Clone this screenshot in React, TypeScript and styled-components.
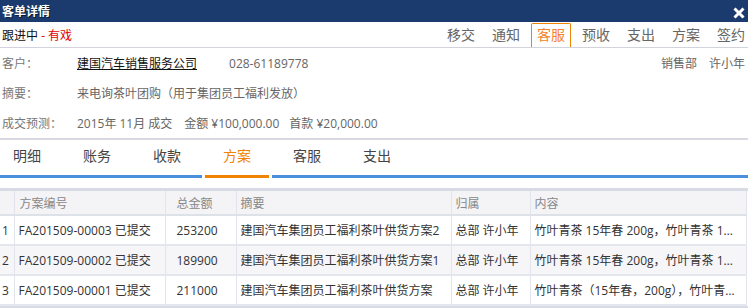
import styled, { createGlobalStyle } from 'styled-components';

const GlobalStyle = createGlobalStyle`
  body {
    margin: 0;
    background: #ffffff;
    font-family: "Open Sans", "Noto Sans CJK SC", sans-serif;
  }
`;

const Panel = styled.div`
  width: 748px;
  height: 308px;
  overflow: hidden;
  background: #ffffff;
`;

const TitleBar = styled.div`
  display: flex;
  align-items: center;
  justify-content: space-between;
  height: 22px;
  padding: 0 3px 0 2px;
  background-color: #1b3b6e;
  color: #ffffff;
  font-size: 12px;
  font-weight: 700;
  text-shadow: 1px 1px 0 #0b1a33;
`;

const CloseIcon = styled.svg`
  width: 12px;
  height: 12px;
  margin-top: 3px;
`;

const StatusRow = styled.div`
  display: flex;
  align-items: flex-end;
  justify-content: space-between;
  height: 25px;
  border-bottom: 1px solid #d3d3de;
`;

const Status = styled.div`
  align-self: center;
  padding-left: 2px;
  font-size: 12px;
  color: #111111;
`;

const Hot = styled.span`
  color: #e60000;
`;

const Actions = styled.div`
  display: flex;
  gap: 5px;
  margin-right: -3px;
`;

const ActionButton = styled.div<{ active?: boolean }>`
  height: 24px;
  line-height: 22px;
  padding: 0 5px;
  box-sizing: border-box;
  border: 1px solid ${props => (props.active ? '#f08300' : 'transparent')};
  border-bottom: none;
  border-radius: 2px 2px 0 0;
  font-size: 14px;
  color: ${props => (props.active ? '#f5822a' : '#666666')};
`;

const Info = styled.div`
  display: flex;
  flex-direction: column;
  border-bottom: 2px solid #d9d9e2;
`;

const InfoRow = styled.div`
  display: flex;
  align-items: center;
  height: 30px;
  font-size: 12px;
  color: #666666;
`;

const Label = styled.span`
  width: 75px;
  padding-left: 2px;
  color: #777777;
`;

const Company = styled.span`
  color: #111111;
  text-decoration: underline;
`;

const Phone = styled.span`
  margin-left: 32px;
`;

const Owner = styled.div`
  display: flex;
  gap: 12px;
  margin-left: auto;
  padding-right: 3px;
`;

const Piece = styled.span<{ gap?: number }>`
  margin-left: ${props => props.gap ?? 0}px;
`;

const TabBar = styled.div`
  display: flex;
  height: 34px;
  margin-top: 1px;
  border-bottom: 3px solid #4a8fdb;
`;

const Tab = styled.div<{ active?: boolean }>`
  position: relative;
  width: 70px;
  padding-left: 13px;
  box-sizing: border-box;
  line-height: 30px;
  font-size: 14px;
  color: ${props => (props.active ? '#f08300' : '#444444')};

  ${props =>
    props.active &&
    `
    &::after {
      content: '';
      position: absolute;
      left: -8px;
      bottom: -3px;
      width: 70px;
      height: 3px;
      box-sizing: border-box;
      background: #f08300;
      border-left: 3px solid #ffffff;
      border-right: 3px solid #ffffff;
    }
  `}
`;

const TableWrap = styled.div`
  margin-top: 10px;
  border-top: 3px solid #d8dbe3;
`;

const Table = styled.table`
  width: 747px;
  table-layout: fixed;
  border-collapse: collapse;
  font-size: 12px;
  color: #333333;
  border-right: 1px solid #e1e5eb;
`;

const HeadCell = styled.th<{ pad?: number }>`
  height: 23px;
  padding: 0 0 0 ${props => props.pad ?? 4}px;
  background: #f4f3f6;
  border-left: 1px solid #e1e5eb;
  border-bottom: 2px solid #dde2e9;
  font-size: 12px;
  font-weight: 400;
  color: #888888;
  text-align: left;
  &:first-child {
    border-left: none;
  }
`;

const BodyRow = styled.tr<{ striped?: boolean }>`
  background: ${props => (props.striped ? '#f6f5f8' : '#ffffff')};
`;

const Cell = styled.td<{ pad?: number }>`
  height: 28px;
  padding: 0 0 0 ${props => props.pad ?? 4}px;
  border-left: 1px solid #e1e5eb;
  border-bottom: 2px solid #e4e8ee;
  white-space: nowrap;
  overflow: hidden;
  text-overflow: ellipsis;
  &:first-child {
    border-left: none;
  }
  &:last-child {
    padding-right: 10px;
  }
`;

const TableBottom = styled.div`
  height: 3px;
  background: #d8dbe3;
`;

const actions = ['移交', '通知', '客服', '预收', '支出', '方案', '签约'];
const tabs = ['明细', '账务', '收款', '方案', '客服', '支出'];

const plans = [
  {
    code: 'FA201509-00003 已提交',
    amount: '253200',
    summary: '建国汽车集团员工福利茶叶供货方案2',
    owner: '总部 许小年',
    content: '竹叶青茶 15年春 200g，竹叶青茶 15年春 100g',
  },
  {
    code: 'FA201509-00002 已提交',
    amount: '189900',
    summary: '建国汽车集团员工福利茶叶供货方案1',
    owner: '总部 许小年',
    content: '竹叶青茶 15年春 200g，竹叶青茶 15年春 100g',
  },
  {
    code: 'FA201509-00001 已提交',
    amount: '211000',
    summary: '建国汽车集团员工福利茶叶供货方案',
    owner: '总部 许小年',
    content: '竹叶青茶（15年春，200g），竹叶青茶（15年春）',
  },
];

const App = () => {
  return (
    <Panel>
      <GlobalStyle />
      <TitleBar>
        <span>客单详情</span>
        <CloseIcon viewBox="0 0 12 12">
          <path d="M1.5 1.5 L10.5 10.5 M10.5 1.5 L1.5 10.5" stroke="#ffffff" strokeWidth="3" />
        </CloseIcon>
      </TitleBar>

      <StatusRow>
        <Status>
          跟进中 <Hot>- 有戏</Hot>
        </Status>
        <Actions>
          {actions.map(a => (
            <ActionButton key={a} active={a === '客服'}>
              {a}
            </ActionButton>
          ))}
        </Actions>
      </StatusRow>

      <Info>
        <InfoRow>
          <Label>客户：</Label>
          <Company>建国汽车销售服务公司</Company>
          <Phone>028-61189778</Phone>
          <Owner>
            <span>销售部</span>
            <span>许小年</span>
          </Owner>
        </InfoRow>
        <InfoRow>
          <Label>摘要：</Label>
          <span>来电询茶叶团购（用于集团员工福利发放）</span>
        </InfoRow>
        <InfoRow>
          <Label>成交预测：</Label>
          <Piece>2015年</Piece>
          <Piece gap={3}>11月</Piece>
          <Piece gap={3}>成交</Piece>
          <Piece gap={12}>金额 ¥100,000.00</Piece>
          <Piece gap={10}>首款 ¥20,000.00</Piece>
        </InfoRow>
      </Info>

      <TabBar>
        {tabs.map(t => (
          <Tab key={t} active={t === '方案'}>
            {t}
          </Tab>
        ))}
      </TabBar>

      <TableWrap>
        <Table>
          <colgroup>
            <col style={{ width: 14 }} />
            <col style={{ width: 151 }} />
            <col style={{ width: 71 }} />
            <col style={{ width: 215 }} />
            <col style={{ width: 79 }} />
            <col />
          </colgroup>
          <thead>
            <tr>
              <HeadCell />
              <HeadCell pad={5}>方案编号</HeadCell>
              <HeadCell pad={11}>总金额</HeadCell>
              <HeadCell>摘要</HeadCell>
              <HeadCell>归属</HeadCell>
              <HeadCell>内容</HeadCell>
            </tr>
          </thead>
          <tbody>
            {plans.map((p, i) => (
              <BodyRow key={p.code} striped={i === 1}>
                <Cell pad={2}>{i + 1}</Cell>
                <Cell pad={4}>{p.code}</Cell>
                <Cell pad={11}>{p.amount}</Cell>
                <Cell>{p.summary}</Cell>
                <Cell>{p.owner}</Cell>
                <Cell>{p.content}</Cell>
              </BodyRow>
            ))}
          </tbody>
        </Table>
        <TableBottom />
      </TableWrap>
    </Panel>
  );
};

export default App;
